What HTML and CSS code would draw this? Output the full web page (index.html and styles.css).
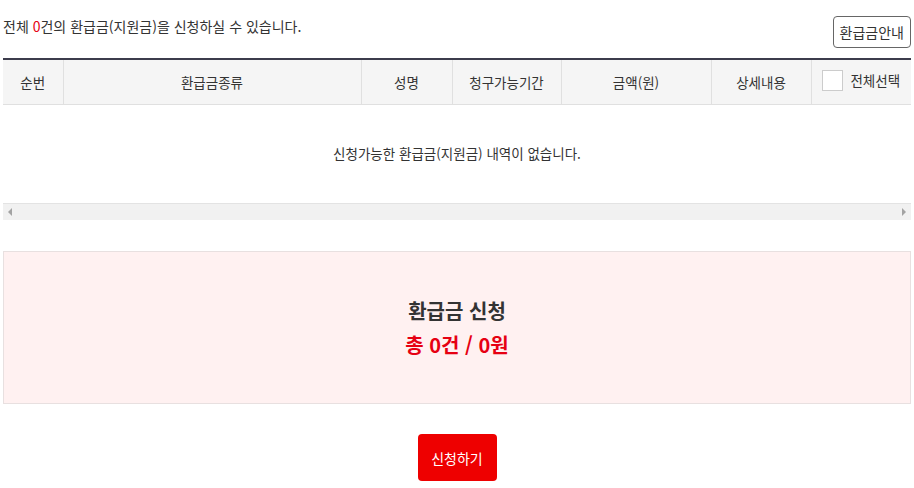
FILE: index.html
```html
<!DOCTYPE html>
<html lang="ko">
  <head>
    <meta charset="UTF-8" />
    <meta name="viewport" content="width=device-width, initial-scale=1" />
    <title>환급금 신청</title>
    <link rel="stylesheet" href="styles.css">
  </head>
  <body>
    <div class="refund-wrap">
      <div class="refund-top">
        <p class="refund-count">전체 <em>0</em>건의 환급금(지원금)을 신청하실 수 있습니다.</p>
        <button type="button" class="btn-guide">환급금안내</button>
      </div>

      <div class="table-scroll">
        <table class="refund-table">
          <colgroup>
            <col style="width: 60px" />
            <col style="width: 298px" />
            <col style="width: 91px" />
            <col style="width: 109px" />
            <col style="width: 150px" />
            <col style="width: 100px" />
            <col style="width: 100px" />
          </colgroup>
          <thead>
            <tr>
              <th>순번</th>
              <th>환급금종류</th>
              <th>성명</th>
              <th>청구가능기간</th>
              <th>금액(원)</th>
              <th>상세내용</th>
              <th>
                <label class="check-all">
                  <span class="check-box"></span>전체선택
                </label>
              </th>
            </tr>
          </thead>
          <tbody>
            <tr>
              <td colspan="7" class="empty">신청가능한 환급금(지원금) 내역이 없습니다.</td>
            </tr>
          </tbody>
        </table>
        <div class="scrollbar">
          <span class="arrow arrow-left"></span>
          <span class="arrow arrow-right"></span>
        </div>
      </div>

      <div class="apply-box">
        <h2>환급금 신청</h2>
        <p class="apply-total">총 0건 / 0원</p>
      </div>

      <div class="apply-actions">
        <button type="button" class="btn-apply">신청하기</button>
      </div>
    </div>
  </body>
</html>
```

FILE: styles.css
```css
body {
  margin: 0;
  font-family: "Noto Sans CJK KR", "Noto Sans", sans-serif;
  color: #333;
  background: #fff;
}
.refund-wrap {
  padding: 0 3px;
}
.refund-top {
  display: flex;
  justify-content: space-between;
  align-items: flex-start;
  height: 58px;
}
.refund-count {
  margin: 16px 0 0;
  font-size: 14px;
  line-height: 20px;
}
.refund-count em {
  font-style: normal;
  color: #e60012;
}
.btn-guide {
  margin-top: 16px;
  height: 32px;
  padding: 0 6px;
  border: 1px solid #666;
  border-radius: 4px;
  background: #fff;
  color: #333;
  font-family: inherit;
  font-size: 14px;
  cursor: pointer;
}
.table-scroll {
  width: 908px;
}
.refund-table {
  width: 100%;
  table-layout: fixed;
  border-collapse: collapse;
  border-top: 2px solid #3c3c4c;
}
.refund-table th {
  height: 44px;
  padding: 0;
  background: #f5f5f5;
  border-bottom: 1px solid #e0e0e0;
  border-left: 1px solid #e0e0e0;
  font-size: 13.5px;
  font-weight: normal;
  color: #333;
}
.refund-table th:first-child {
  border-left: none;
}
.check-all {
  display: inline-flex;
  align-items: center;
  gap: 7px;
}
.check-box {
  width: 19px;
  height: 19px;
  border: 1px solid #ccc;
  background: #fff;
}
.refund-table td.empty {
  height: 96px;
  padding: 0 0 2px;
  text-align: center;
  font-size: 13.5px;
}
.scrollbar {
  position: relative;
  height: 16px;
  background: #f1f1f1;
  border-top: 1px solid #e3e3e3;
}
.arrow {
  position: absolute;
  top: 4px;
  width: 0;
  height: 0;
  border-top: 4px solid transparent;
  border-bottom: 4px solid transparent;
}
.arrow-left {
  left: 5px;
  border-right: 4px solid #a3a3a3;
}
.arrow-right {
  right: 5px;
  border-left: 4px solid #a3a3a3;
}
.apply-box {
  margin-top: 31px;
  height: 151px;
  border: 1px solid #e8e0e0;
  background: #fff1f1;
  display: flex;
  flex-direction: column;
  justify-content: center;
  align-items: center;
}
.apply-box h2 {
  margin: 0;
  font-size: 20px;
  line-height: 34px;
  font-weight: bold;
  color: #333;
}
.apply-total {
  margin: 0;
  font-size: 20px;
  line-height: 34px;
  font-weight: bold;
  color: #e60012;
}
.apply-actions {
  display: flex;
  justify-content: center;
  padding-top: 30px;
}
.btn-apply {
  width: 79px;
  height: 47px;
  border: none;
  border-radius: 4px;
  background: #ee0000;
  color: #fff;
  font-family: inherit;
  font-size: 14px;
  cursor: pointer;
}
```
